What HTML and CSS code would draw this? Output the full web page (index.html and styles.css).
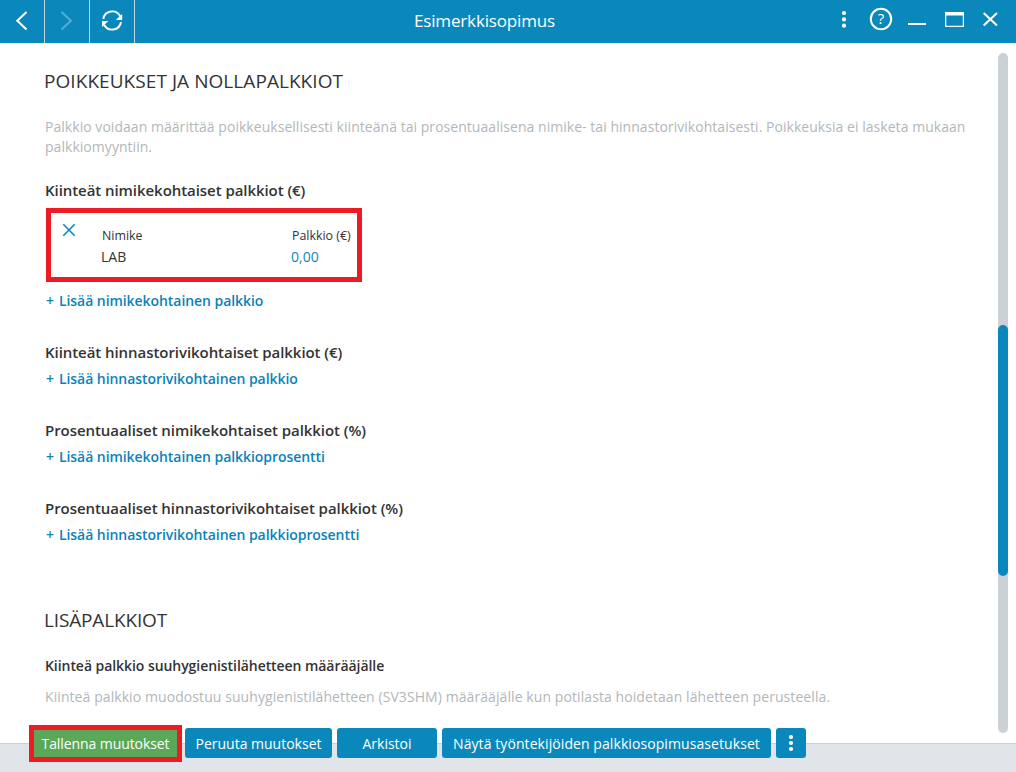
FILE: index.html
```
<!DOCTYPE html>
<html lang="fi">
<head>
  <meta charset="UTF-8">
  <meta name="viewport" content="width=device-width, initial-scale=1.0">
  <title>Esimerkkisopimus</title>
  <link rel="stylesheet" href="styles.css">
</head>
<body>

  <header class="titlebar">
    <div class="nav">
      <button class="nav-btn" aria-label="Takaisin">
        <svg width="44" height="43" viewBox="0 0 44 43"><path d="M26.5 12 L17.3 20.7 L26.5 29.5"/></svg>
      </button>
      <button class="nav-btn" aria-label="Eteenpäin" disabled>
        <svg width="44" height="43" viewBox="0 0 44 43"><path d="M16.5 12 L26 20.7 L16.5 29.5"/></svg>
      </button>
      <button class="nav-btn" aria-label="Päivitä">
        <svg class="refresh" width="44" height="43" viewBox="0 0 44 43">
          <path d="M13.3 19 A9 9 0 0 1 30.3 16.5"/>
          <path d="M31 22 A9 9 0 0 1 14 24.5"/>
          <path class="fill" d="M32.2 14 V20 H25.8 Z"/>
          <path class="fill" d="M12 27 V21 H18.4 Z"/>
        </svg>
      </button>
    </div>
    <h1 class="window-title">Esimerkkisopimus</h1>
    <div class="tools">
      <svg width="176" height="43" viewBox="0 0 176 43">
        <g class="fill">
          <circle cx="4" cy="13" r="2.1"/>
          <circle cx="4" cy="19.4" r="2.1"/>
          <circle cx="4" cy="25.7" r="2.1"/>
        </g>
        <circle cx="41" cy="19" r="10.2"/>
        <text class="help" x="41" y="24" text-anchor="middle">?</text>
        <path d="M68 24 H86"/>
        <path class="thin" d="M105.7 13 V26.3 H123.4 V13"/>
        <path class="fill" d="M105 12 H124 V15.5 H105 Z"/>
        <path d="M143.7 13 L157 25.5 M157 13 L143.7 25.5"/>
      </svg>
    </div>
  </header>

  <main class="page">
    <div class="content">
      <section class="exceptions">
        <h2>POIKKEUKSET JA NOLLAPALKKIOT</h2>
        <p class="info">Palkkio voidaan määrittää poikkeuksellisesti kiinteänä tai prosentuaalisena nimike- tai hinnastorivikohtaisesti. Poikkeuksia ei lasketa mukaan<br>palkkiomyyntiin.</p>

        <div class="group">
          <h3>Kiinteät nimikekohtaiset palkkiot (€)</h3>
          <div class="item">
            <svg class="remove" width="14" height="14" viewBox="0 0 14 14"><path d="M1.3 1.3 L12.7 12.7 M12.7 1.3 L1.3 12.7"/></svg>
            <div class="col name">
              <span class="label">Nimike</span>
              <span class="value">LAB</span>
            </div>
            <div class="col">
              <span class="label">Palkkio (€)</span>
              <span class="value fee">0,00</span>
            </div>
          </div>
          <a class="add"><span class="plus">+</span>Lisää nimikekohtainen palkkio</a>
        </div>

        <div class="group">
          <h3>Kiinteät hinnastorivikohtaiset palkkiot (€)</h3>
          <a class="add"><span class="plus">+</span>Lisää hinnastorivikohtainen palkkio</a>
        </div>

        <div class="group">
          <h3>Prosentuaaliset nimikekohtaiset palkkiot (%)</h3>
          <a class="add"><span class="plus">+</span>Lisää nimikekohtainen palkkioprosentti</a>
        </div>

        <div class="group">
          <h3>Prosentuaaliset hinnastorivikohtaiset palkkiot (%)</h3>
          <a class="add"><span class="plus">+</span>Lisää hinnastorivikohtainen palkkioprosentti</a>
        </div>
      </section>

      <section class="extra">
        <h2>LISÄPALKKIOT</h2>
        <h3>Kiinteä palkkio suuhygienistilähetteen määrääjälle</h3>
        <p class="info">Kiinteä palkkio muodostuu suuhygienistilähetteen (SV3SHM) määrääjälle kun potilasta hoidetaan lähetteen perusteella.</p>
      </section>
    </div>
    <div class="scrollbar"><div class="thumb"></div></div>
  </main>

  <footer class="footer">
    <div class="actions">
      <button class="btn save">Tallenna muutokset</button>
      <button class="btn cancel">Peruuta muutokset</button>
      <button class="btn archive">Arkistoi</button>
      <button class="btn settings">Näytä työntekijöiden palkkiosopimusasetukset</button>
      <button class="btn more" aria-label="Lisää">
        <svg width="6" height="18" viewBox="0 0 6 18">
          <circle cx="3" cy="3" r="2.1"/>
          <circle cx="3" cy="9" r="2.1"/>
          <circle cx="3" cy="15" r="2.1"/>
        </svg>
      </button>
    </div>
  </footer>

</body>
</html>
```
FILE: styles.css
```
* { box-sizing: border-box; }
body {
  margin: 0;
  height: 772px;
  display: flex;
  flex-direction: column;
  overflow: hidden;
  background: #fff;
  color: #333;
  font-family: "Segoe UI", "Open Sans", sans-serif;
  font-size: 14px;
  line-height: 20px;
}
h1, h2, h3, p { margin: 0; }
button {
  border: 0;
  padding: 0;
  font: inherit;
  color: #fff;
}
svg {
  display: block;
  fill: none;
  stroke: #fff;
  stroke-width: 2;
}
svg .fill { fill: #fff; stroke: none; }

/* title bar */
.titlebar {
  flex: none;
  display: grid;
  grid-template-columns: 176px 1fr 176px;
  height: 43px;
  background: #0b88bb;
  color: #fff;
}
.nav { display: flex; }
.nav-btn {
  width: 45px;
  background: none;
  border-right: 1px solid #c6d5dc;
}
.nav-btn:disabled svg { opacity: .3; }
.refresh { stroke-width: 1.9; }
.window-title {
  text-align: center;
  font-size: 17px;
  font-weight: 400;
  line-height: 41px;
  letter-spacing: -0.15px;
  padding-right: 47px;
}
.thin { stroke-width: 1.2; }
.help {
  fill: #fff;
  stroke: none;
  font-size: 15px;
}

/* page */
.page {
  flex: none;
  display: flex;
  height: 700px;
}
.content {
  flex: 1;
  padding: 28px 0 0 45px;
  white-space: nowrap;
}
h2 {
  margin-left: -1px;
  font-size: 19px;
  font-weight: 400;
  letter-spacing: 0.06px;
}
h3 {
  font-size: 15px;
  font-weight: 600;
  letter-spacing: -0.06px;
}
.info {
  color: #b3b7ba;
  letter-spacing: 0.04px;
}
.exceptions .info { margin: 26px 0 23px; }
.group { margin-bottom: 31px; }
.add {
  display: block;
  margin: 7px 0 0 1px;
  color: #0b82b8;
  font-weight: 600;
  letter-spacing: -0.06px;
}
.plus { margin-right: 5px; }
.item {
  display: flex;
  width: 316px;
  height: 74px;
  margin: 8px 0 9px 1px;
  padding: 13px 0 0 11px;
  border: 5px solid #ed1c24;
}
.remove {
  stroke: #0b88bb;
  stroke-width: 1.6;
  margin-top: -3px;
}
.col {
  display: flex;
  flex-direction: column;
}
.name {
  width: 190px;
  margin-left: 26px;
}
.label {
  font-size: 12.4px;
  line-height: 20px;
}
.value {
  margin-left: -1px;
  line-height: 22px;
}
.fee { color: #0b88bb; }
.extra { margin-top: 65px; }
.extra h2 { letter-spacing: -0.15px; }
.extra h3 {
  margin: 26px 0 11px;
  font-size: 14px;
}
.extra .info { letter-spacing: 0.08px; }

.scrollbar {
  width: 10px;
  height: 680px;
  margin: 10px 8px 0 0;
  padding-top: 272px;
  border-radius: 5px;
  background: #ccd1d5;
}
.thumb {
  height: 251px;
  border-radius: 5px;
  background: #0b88bb;
}

/* footer */
.footer {
  flex: 1;
  background: #e1e4e9;
  border-top: 1px solid #ccd0d3;
}
.actions {
  display: flex;
  gap: 5px;
  margin: -19px 0 0 29px;
}
.btn {
  height: 30px;
  margin-top: 3px;
  padding-top: 2px;
  background: #0b88bb;
  border-radius: 3px;
  white-space: nowrap;
}
.save {
  width: 153px;
  height: 37px;
  margin: 0 -2px 0 0;
  padding-top: 1px;
  border: 5px solid #ed1c24;
  border-radius: 0;
  background: #5aa858;
  letter-spacing: -0.08px;
}
.cancel { width: 147px; }
.archive { width: 100px; }
.settings {
  width: 329px;
  letter-spacing: 0.08px;
}
.more {
  display: flex;
  justify-content: center;
  align-items: center;
  width: 30px;
  padding: 0;
}
.more svg { fill: #fff; stroke: none; }
```
